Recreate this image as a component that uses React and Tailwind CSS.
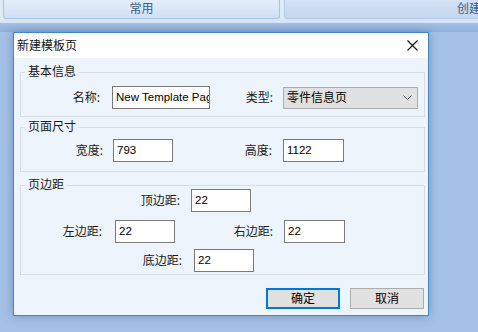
import React from 'react';

const font = { fontFamily: '"Noto Sans", "Noto Sans CJK SC", sans-serif' };
const inputFont = { fontFamily: '"Liberation Sans", "Noto Sans CJK SC", sans-serif' };

function TextBox({ value, w }) {
  return (
    <div
      className={`h-[23px] ${w} border border-[#7a7a7a] bg-white pl-[3px] overflow-hidden whitespace-nowrap text-[11.5px] leading-[21px] text-black`}
      style={inputFont}
    >
      {value}
    </div>
  );
}

function Label({ children, w }) {
  return <div className={`${w} shrink-0 text-right text-[12px] leading-[23px] text-[#1a1a1a]`}>{children}</div>;
}

function Group({ title, children, className }) {
  return (
    <fieldset className={`border border-[#d6dde7] ${className}`}>
      <legend className="ml-[4px] px-[3px] text-[12px] leading-[16px] text-[#1a1a1a]">{title}</legend>
      {children}
    </fieldset>
  );
}

function App() {
  return (
    <div className="relative w-[478px] h-[332px] overflow-hidden bg-[#a5c1e8]" style={font}>
      {/* ribbon tabs */}
      <div className="flex h-[19px] bg-[#dfeaf7] overflow-hidden">
        <div className="ml-[3px] w-[277px] shrink-0 rounded-b-[3px] border border-t-0 border-[#a8c3e3] bg-gradient-to-b from-[#e4eefa] to-[#cfe0f5] text-center text-[12px] leading-[18px] text-[#3d5c86]">
          常用
        </div>
        <div className="ml-[4px] w-[370px] shrink-0 rounded-b-[3px] border border-t-0 border-[#b4cbe6] bg-gradient-to-b from-[#d3e2f4] to-[#c3d7ef] text-center text-[12px] leading-[18px] text-[#3d5c86]">
          创建
        </div>
      </div>
      <div className="h-[4px] bg-[#d7e5f6]" />
      <div className="h-[9px] bg-gradient-to-b from-[#a6c1e4] to-[#8fb0dc]" />

      {/* dialog window */}
      <div className="absolute left-[13px] top-[32px] w-[416px] h-[284px] border border-[#3f88cf] bg-[#eef4fc] shadow-[0_0_10px_rgba(30,60,110,0.35)] flex flex-col">
        <div className="h-[25px] bg-white flex items-center justify-between pl-[3px] pr-[10px]">
          <span className="text-[12px] text-[#111]">新建模板页</span>
          <svg width="11" height="11" viewBox="0 0 11 11">
            <path d="M0.5 0.5 L10.5 10.5 M10.5 0.5 L0.5 10.5" stroke="#111" strokeWidth="1.1" />
          </svg>
        </div>

        <div className="flex flex-col pl-[6px] pr-[3px] pt-[6px]">
          <Group title="基本信息" className="h-[53px] pt-[6px]">
            <div className="flex items-center">
              <Label w="w-[79px]">名称:</Label>
              <div className="ml-[12px]">
                <TextBox value="New Template Page" w="w-[98px]" />
              </div>
              <Label w="w-[63px]">类型:</Label>
              <div className="ml-[10px] h-[22px] w-[135px] border border-[#adadad] bg-[#e1e1e1] flex items-center justify-between pl-[3px] pr-[5px] text-[12px] text-black">
                <span>零件信息页</span>
                <svg width="9" height="5" viewBox="0 0 9 5">
                  <path d="M0.5 0.5 L4.5 4.5 L8.5 0.5" fill="none" stroke="#555" strokeWidth="1" />
                </svg>
              </div>
            </div>
          </Group>

          <Group title="页面尺寸" className="mt-[2px] h-[53px] pt-[4px]">
            <div className="flex items-center">
              <Label w="w-[82px]">宽度:</Label>
              <div className="ml-[10px]">
                <TextBox value="793" w="w-[60px]" />
              </div>
              <Label w="w-[99px]">高度:</Label>
              <div className="ml-[11px]">
                <TextBox value="1122" w="w-[61px]" />
              </div>
            </div>
          </Group>

          <Group title="页边距" className="mt-[5px] h-[98px]">
            <div className="flex flex-col -mt-[4px]">
              <div className="flex items-center">
                <Label w="w-[159px]">顶边距:</Label>
                <div className="ml-[11px]">
                  <TextBox value="22" w="w-[60px]" />
                </div>
              </div>
              <div className="mt-[8px] flex items-center">
                <Label w="w-[81px]">左边距:</Label>
                <div className="ml-[13px]">
                  <TextBox value="22" w="w-[60px]" />
                </div>
                <Label w="w-[98px]">右边距:</Label>
                <div className="ml-[11px]">
                  <TextBox value="22" w="w-[61px]" />
                </div>
              </div>
              <div className="mt-[6px] flex items-center">
                <Label w="w-[161px]">底边距:</Label>
                <div className="ml-[12px]">
                  <TextBox value="22" w="w-[60px]" />
                </div>
              </div>
            </div>
          </Group>
        </div>

        <div className="mt-[13px] flex justify-end gap-[10px] pr-[4px]">
          <button className="h-[21px] w-[74px] border-2 border-[#0078d7] bg-[#e1e1e1] text-[12px] leading-[17px] text-black">
            确定
          </button>
          <button className="h-[21px] w-[74px] border border-[#adadad] bg-[#e1e1e1] text-[12px] leading-[19px] text-black">
            取消
          </button>
        </div>
      </div>
    </div>
  );
}

export default App;
